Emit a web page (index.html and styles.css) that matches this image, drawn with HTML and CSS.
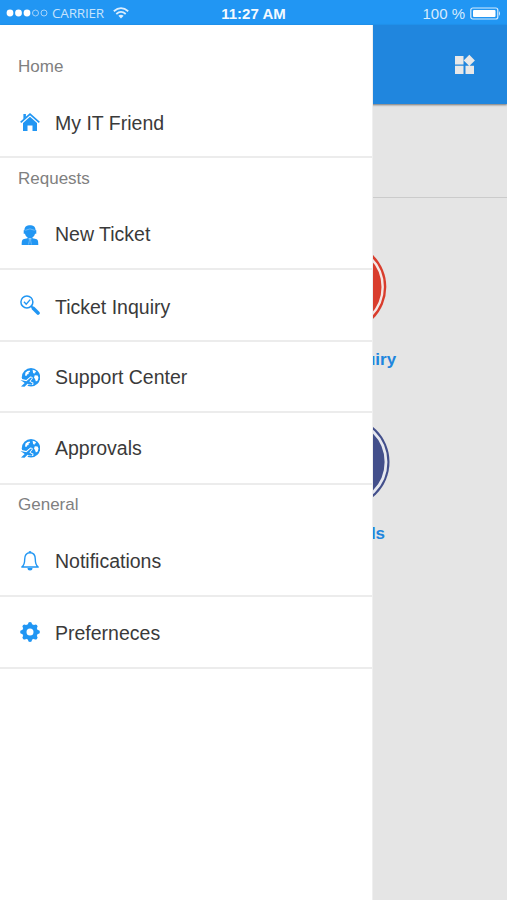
FILE: index.html
```
<!DOCTYPE html>
<html lang="en">
<head>
<meta charset="utf-8">
<title>My IT Friend</title>
<link rel="stylesheet" href="styles.css">
</head>
<body>
<div class="phone">
  <header class="status">
    <div class="status-left">
      <svg width="42" height="12" viewBox="0 0 42 12"><g fill="#fff"><circle cx="4" cy="6" r="3.4"/><circle cx="12.5" cy="6" r="3.4"/><circle cx="21" cy="6" r="3.4"/></g><g fill="none" stroke="#a6d3fa" stroke-width="1"><circle cx="29.5" cy="6" r="3"/><circle cx="38" cy="6" r="3"/></g></svg>
      <span class="carrier">CARRIER</span>
      <svg class="wifi" width="16" height="12" viewBox="0 0 16 12"><g fill="none" stroke="#dceefe" stroke-width="1.8"><path d="M.8 4.3Q8-2 15.2 4.3"/><path d="M3.3 7Q8 2.8 12.7 7"/></g><path fill="#dceefe" d="M5.4 8.8Q8 6.6 10.6 8.8L8 11.5z"/></svg>
    </div>
    <strong class="time">11:27 AM</strong>
    <div class="status-right">
      <span>100 %</span>
      <svg width="31" height="13" viewBox="0 0 31 13"><rect x=".8" y="1" width="27" height="11" rx="2" fill="none" stroke="#d6ebfd" stroke-width="1.2"/><rect x="3" y="3" width="22.5" height="7" rx="1" fill="#fff"/><path fill="#d6ebfd" d="M29 4q2 2.5 0 5z"/></svg>
    </div>
  </header>

  <div class="screen">
    <div class="toolbar">
      <svg width="22" height="22" viewBox="0 0 22 22" fill="#e8e8e8"><path d="M1 2h8.5v8.5H1zM1 11.7h8.5V20H1zM11.500 11.700H20V20h-8.500zM15.300.8l5.600 5.600-5.600 5.600-5.600-5.600z"/></svg>
    </div>
    <div class="banner"></div>
    <main class="tiles">
      <div class="tile">
        <svg width="92" height="90" viewBox="-1 0 92 90"><circle cx="45.500" cy="45" r="44.800" fill="#d93d2d"/><circle cx="45.500" cy="45" r="41.200" fill="none" stroke="#f4e7e5" stroke-width="2.400"/></svg>
        <span class="tile-name">Ticket Inquiry</span>
      </div>
      <div class="tile tile-approvals">
        <svg width="92" height="92" viewBox="0 0 92 92"><circle cx="46" cy="46" r="45.500" fill="#434f8b"/><circle cx="46" cy="46" r="42" fill="none" stroke="#e6e8f0" stroke-width="2.800"/></svg>
        <span class="tile-name">Approvals</span>
      </div>
    </main>

    <nav class="drawer">
      <h2 class="group group-first">Home</h2>
      <a class="item item-home"><svg class="icon icon-home" viewBox="0 0 20 20"><path fill="none" stroke="#2196f3" stroke-width="1.700" d="M.7 10.400L10 2.100l9.300 8.300"/><path fill="#2196f3" d="M3.400 2h2.500v3L3.400 7.200zM10 4.800l7 6.200v8h-4.500v-5.500h-5V19H3v-8z"/></svg><span>My IT Friend</span></a>
      <h2 class="group">Requests</h2>
      <a class="item"><svg class="icon icon-agent" viewBox="0 0 20 20"><path fill="#2196f3" d="M4.400 5.200C4.700.9 7 .2 10 .2s5.300.7 5.600 5h.7v3.500h-1.300c-.4 1.800-1.300 3-2.500 3.600v1l3.500.8c1.800.5 2.300 1.700 2.300 5.900H1.700c0-4.200.5-5.400 2.300-5.900l3.500-.8v-1c-1.200-.6-2.100-1.800-2.500-3.600H3.700V5.200z"/><path fill="none" stroke="#8ec8f8" stroke-width=".7" d="M5.300 5.300Q10 2.500 14.700 5.300"/><path fill="#fff" d="M8.500 13.500h3l-.5 1.300.3 4.700H8.700l.3-4.700z"/><path fill="#2196f3" d="M9.400 14h1.200l.4 6H9z"/></svg><span>New Ticket</span></a>
      <a class="item item-low"><svg class="icon icon-search" viewBox="0 0 20 20"><circle cx="6.900" cy="6.900" r="6" fill="none" stroke="#2196f3" stroke-width="1.500"/><path fill="none" stroke="#2196f3" stroke-width="1.400" d="M4 6.800l2.200 2.400 4-4.600"/><path stroke="#2196f3" stroke-width="2" d="M11 11l2 2"/><path stroke="#2196f3" stroke-width="3.600" stroke-linecap="round" d="M13.500 13.500l4.500 4.500"/></svg><span>Ticket Inquiry</span></a>
      <a class="item"><svg class="icon" viewBox="0 0 20 20"><use href="#globe"/></svg><span>Support Center</span></a>
      <a class="item item-approvals"><svg class="icon" viewBox="0 0 20 20"><g id="globe"><circle cx="11" cy="9.300" r="9.200" fill="#2196f3"/><path fill="#fff" d="M5.500 4.600l2-1.600 2.200-.4.300 1.100-1.600 1 .4 1.300-1.800.6-.5 1.300-1.500-.5zM12.600 1.800l2.500.6 1.200 1.700-1.400.4-.4 1.300-1.400-.8zM14.800 7.300l2.800.2.900 2-.8 2.900-1.800 1.200-.9-2.500-1-1.500z"/><path fill="#fff" d="M0 10.500l6.200 1.400 4.200-3.300 2 .4.300 1.500-2.200 2.800 3 1.500-.3 2.200-4.700-.4-3 3.400H0z"/><path fill="#2196f3" d="M.5 12l5.900 1.200 4-3.400q1.500-.5 1.600.3l-2.600 3.500 3.200 1.800-.8 1.300-4.300-1L4.500 18.700 1 18.500 4.700 15z"/></g></svg><span>Approvals</span></a>
      <h2 class="group group-general">General</h2>
      <a class="item"><svg class="icon icon-bell" viewBox="0 0 20 20"><path fill="none" stroke="#2196f3" stroke-width="1.400" stroke-linejoin="round" d="M1.800 16c2.200-1.600 2.900-3.300 2.900-7.800 0-4 1.800-6.500 5.300-6.500s5.300 2.500 5.300 6.500c0 4.500.7 6.200 2.900 7.800z"/><path fill="#2196f3" d="M8.400 1.600a1.600 1.600 0 0 1 3.200 0zM7.500 17h5a2.500 2.500 0 0 1-5 0z"/></svg><span>Notifications</span></a>
      <a class="item"><svg class="icon icon-gear" viewBox="0 0 20 20"><circle cx="10" cy="10" r="5.700" fill="none" stroke="#2196f3" stroke-width="4.400"/><g stroke="#2196f3" stroke-width="4" stroke-linecap="round"><path d="M10 2.100v1.500M10 16.400v1.500M2.100 10h1.500M16.400 10h1.500M4.500 4.500l1 1M14.500 14.500l1 1M4.500 15.500l1-1M14.500 5.500l1-1"/></g></svg><span>Preferneces</span></a>
    </nav>
  </div>
</div>
</body>
</html>
```
FILE: styles.css
```
* { box-sizing: border-box; }

body {
  margin: 0;
  font-family: "Liberation Sans", Arial, sans-serif;
}

.phone {
  width: 507px;
  height: 900px;
  display: flex;
  flex-direction: column;
  overflow: hidden;
}

.status {
  height: 25px;
  flex: none;
  display: grid;
  grid-template-columns: 1fr auto 1fr;
  align-items: center;
  padding: 1px 6px 0;
  background: #2196f3;
  color: #d6ebfd;
}

.status-left,
.status-right {
  display: flex;
  align-items: center;
}

.status-right {
  justify-content: flex-end;
  gap: 5px;
  font-size: 15px;
}

.carrier {
  width: 53px;
  margin: 0 8px 0 4px;
  font-family: "Open Sans", sans-serif;
  font-size: 13.5px;
  line-height: 20px;
  letter-spacing: -0.2px;
  color: #c6e3fc;
}

.wifi { margin-top: -1px; }

.time {
  font-size: 15px;
  color: #f4faff;
}

.screen {
  position: relative;
  flex: 1;
  background: #e5e5e5;
}

.toolbar {
  position: relative;
  height: 79px;
  display: flex;
  align-items: center;
  justify-content: flex-end;
  padding-right: 31px;
  background: #2086de;
  box-shadow: 0 1px 2px rgba(0, 0, 0, 0.5);
}

.banner {
  height: 94px;
  border-bottom: 1px solid #cbcbcb;
}

.tiles {
  padding: 44px 0 0 251px;
}

.tile {
  width: 180px;
  height: 174px;
  display: flex;
  flex-direction: column;
  align-items: center;
  gap: 18px;
}

.tile-approvals {
  margin-left: 2.5px;
  gap: 16px;
}

.tile-name {
  font-size: 17px;
  line-height: 20px;
  font-weight: bold;
  color: #2086de;
}

.drawer {
  position: absolute;
  inset: 0 auto 0 0;
  width: 373px;
  background: #fff;
  border-right: 1px solid #efefef;
}

.group {
  height: 41px;
  margin: 0;
  padding-left: 18px;
  font-size: 17px;
  line-height: 41px;
  font-weight: normal;
  color: #808080;
}

.group-first {
  height: 61px;
  padding-top: 21px;
}

.group-general { line-height: 39px; }

.item {
  height: 71.5px;
  display: flex;
  align-items: center;
  gap: 15px;
  padding: 3px 0 0 20px;
  border-bottom: 2px solid #ececec;
  font-size: 19.5px;
  color: #3a3a3a;
}

.item-home { padding-top: 6px; }

.item-low { padding-top: 5px; }

.item-approvals { padding-top: 2px; }

.icon {
  width: 20px;
  height: 20px;
  flex: none;
}

.icon-home { margin-top: -3px; }

.icon-agent { margin-top: 1px; }

.icon-search { margin-top: -4px; }

.icon-bell { margin-top: -2px; }

.icon-gear { margin-top: -3px; }
```
